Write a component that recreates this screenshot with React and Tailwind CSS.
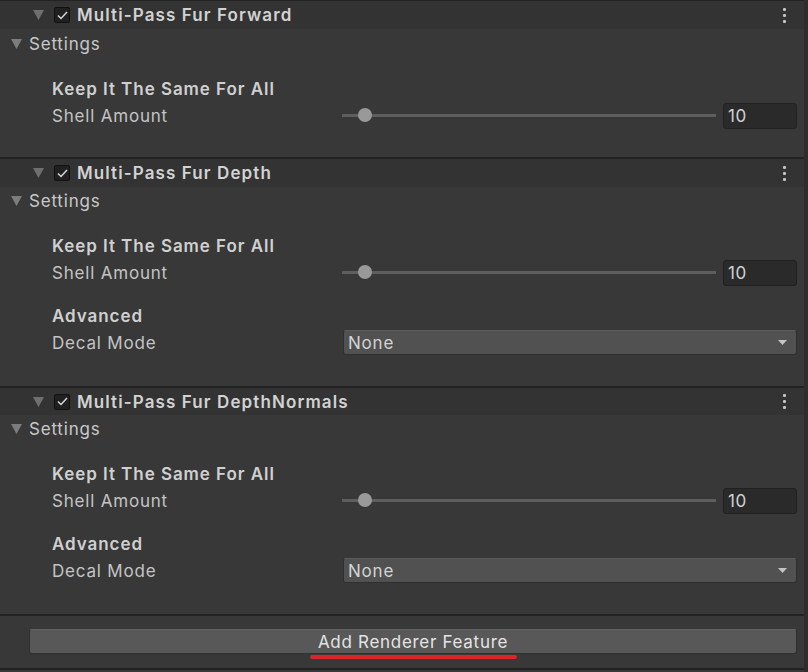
import React from "react";

const FONT = { fontFamily: "Inter, 'Noto Sans', sans-serif" };

const Triangle = ({ className }) => (
    <svg className={className} width="11" height="10" viewBox="0 0 11 10">
        <path d="M0 0 L11 0 L5.5 10 Z" fill="currentColor" />
    </svg>
);

const Kebab = () => (
    <div className="flex flex-col items-center gap-[3px] w-[6px]">
        <span className="block w-[3px] h-[3px] bg-[#c4c4c4] rounded-[1px]" />
        <span className="block w-[3px] h-[3px] bg-[#c4c4c4] rounded-[1px]" />
        <span className="block w-[3px] h-[3px] bg-[#c4c4c4] rounded-[1px]" />
    </div>
);

const Header = ({ title, h }) => (
    <div className="bg-[#333333] flex items-center" style={{ height: h }}>
        <Triangle className="ml-[33px] text-[#6f6f6f]" />
        <div className="ml-[10px] w-[16px] h-[16px] rounded-[2px] bg-[#202020] border border-[#111111] flex items-center justify-center">
            <svg width="11" height="9" viewBox="0 0 11 9">
                <path d="M1 4.5 L4 7.5 L10 1" fill="none" stroke="#d6d6d6" strokeWidth="1.5" />
            </svg>
        </div>
        <span className="ml-[7px] pt-[2px] text-[17px] font-semibold text-[#d2d2d2] tracking-[1.1px]">{title}</span>
        <div className="ml-auto mr-[17px]">
            <Kebab />
        </div>
    </div>
);

const SettingsRow = ({ h }) => (
    <div className="flex items-center" style={{ height: h }}>
        <Triangle className="ml-[11px] text-[#7c7c7c]" />
        <span className="ml-[7px] pt-[2px] text-[17px] text-[#c8c8c8] tracking-[0.8px]">Settings</span>
    </div>
);

const GroupLabel = ({ children }) => (
    <div className="h-[27px] flex items-center pl-[52px]">
        <span className="pt-[2px] text-[17px] font-semibold text-[#d0d0d0] tracking-[0.95px]">{children}</span>
    </div>
);

const ShellRow = () => (
    <div className="h-[27px] flex items-center pl-[52px] pr-[7px]">
        <span className="w-[290px] shrink-0 pt-[2px] text-[17px] text-[#c4c4c4] tracking-[0.8px]">Shell Amount</span>
        <div className="relative w-[374px] shrink-0 h-[3px] bg-[#5e5e5e]">
            <div className="absolute left-[16px] top-[-6px] w-[14px] h-[14px] rounded-full bg-[#999999]" />
        </div>
        <div className="ml-[7px] w-[74px] shrink-0 h-[26px] rounded-[3px] bg-[#2a2a2a] border border-[#212121] flex items-center pl-[4px]">
            <span className="pt-[2px] text-[17px] text-[#d2d2d2] tracking-[0.5px]">10</span>
        </div>
    </div>
);

const DecalRow = () => (
    <div className="h-[27px] flex items-center pl-[52px] pr-[7px]">
        <span className="w-[291px] shrink-0 pt-[2px] text-[17px] text-[#c4c4c4] tracking-[0.8px]">Decal Mode</span>
        <div className="flex-1 h-[25px] rounded-[3px] bg-[#515151] border border-[#2f2f2f] border-t-[#5a5a5a] flex items-center pl-[4px] pr-[9px]">
            <span className="pt-[2px] text-[17px] text-[#d4d4d4] tracking-[0.8px]">None</span>
            <svg className="ml-auto" width="9" height="5" viewBox="0 0 9 5">
                <path d="M0 0 L9 0 L4.5 5 Z" fill="#c4c4c4" />
            </svg>
        </div>
    </div>
);

const Separator = () => <div className="h-[2px] bg-[#222222]" />;

const Feature = ({ title, advanced, bottom, headerH = 28, settingsH = 28 }) => (
    <div>
        <Header title={title} h={headerH} />
        <SettingsRow h={settingsH} />
        <div className="h-[17px]" />
        <GroupLabel>Keep It The Same For All</GroupLabel>
        <ShellRow />
        {advanced && (
            <>
                <div className="h-[16px]" />
                <GroupLabel>Advanced</GroupLabel>
                <DecalRow />
            </>
        )}
        <div style={{ height: bottom }} />
        <Separator />
    </div>
);

export default function App() {
    return (
        <div className="w-[808px] h-[672px] bg-[#383838] overflow-hidden flex" style={FONT}>
            <div className="w-[804px] flex flex-col">
                <div className="h-[1px] bg-[#222222]" />
                <Feature title="Multi-Pass Fur Forward" bottom={28} settingsH={29} />
                <Feature title="Multi-Pass Fur Depth" advanced bottom={30} />
                <Feature title="Multi-Pass Fur DepthNormals" advanced bottom={30} headerH={27} />
                <div className="h-[52px] pt-[13px] pl-[29px] pr-[7px]">
                    <button className="w-full h-[25px] rounded-[3px] bg-[#585858] border border-[#303030] border-t-[#626262] flex items-center justify-center text-[17px] text-[#e4e4e4] tracking-[0.7px]">
                        <span className="pt-[2px]">Add Renderer Feature</span>
                    </button>
                    <div className="flex justify-center mt-[1px]">
                        <div className="w-[207px] h-[4px] rounded-full bg-[#d9262b]" />
                    </div>
                </div>
                <Separator />
            </div>
            <div className="w-[4px] bg-[#2d2d2d]" />
        </div>
    );
}
